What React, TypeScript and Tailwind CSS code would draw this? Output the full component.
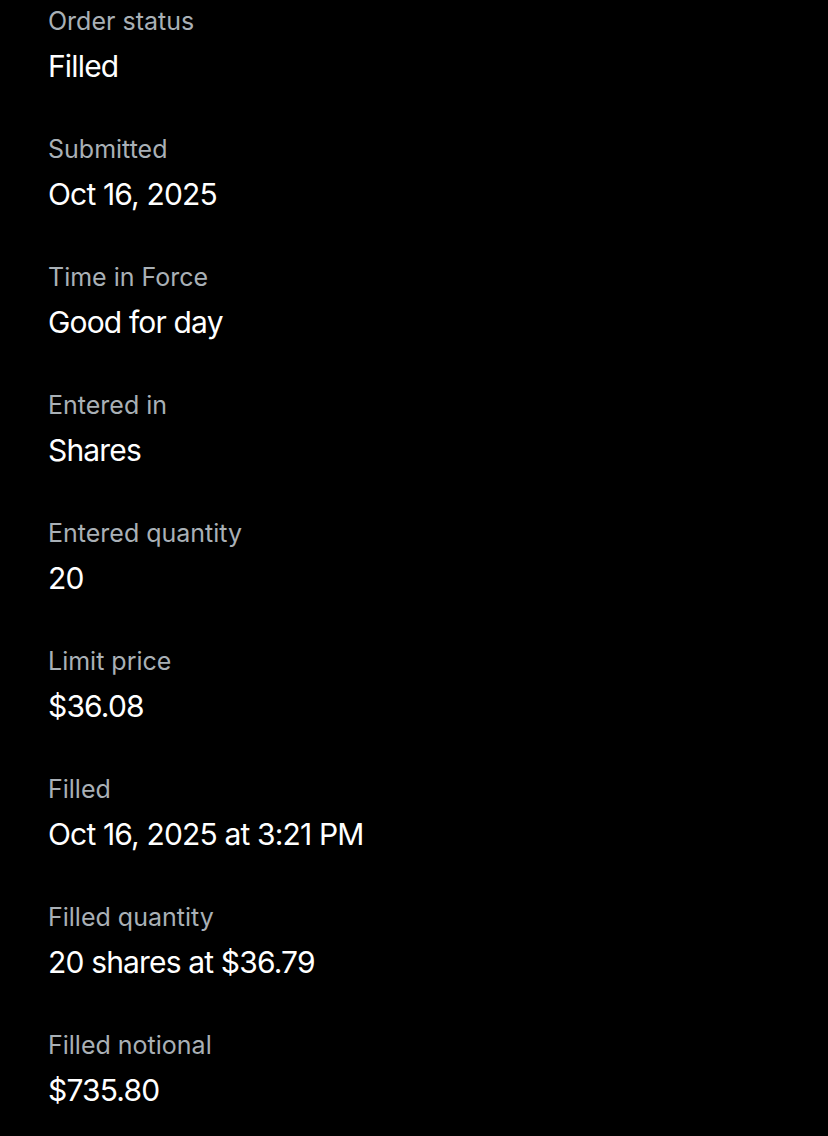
const rows = [
    { label: 'Order status', value: 'Filled' },
    { label: 'Submitted', value: 'Oct 16, 2025' },
    { label: 'Time in Force', value: 'Good for day' },
    { label: 'Entered in', value: 'Shares' },
    { label: 'Entered quantity', value: '20' },
    { label: 'Limit price', value: '$36.08' },
    { label: 'Filled', value: 'Oct 16, 2025 at 3:21 PM' },
    { label: 'Filled quantity', value: '20 shares at $36.79' },
    { label: 'Filled notional', value: '$735.80' },
];

export default function App() {
    return (
        <div className="min-h-screen bg-black px-[48px] pt-[5px] font-['Inter',sans-serif]">
            <div className="flex flex-col gap-[47px]">
                {rows.map(row => (
                    <div key={row.label} className="flex flex-col gap-[9px]">
                        <span className="text-[25px] leading-[32px] text-[#a9b0b6]">{row.label}</span>
                        <span className="text-[30px] leading-[40px] tracking-[-0.028em] text-white">{row.value}</span>
                    </div>
                ))}
            </div>
        </div>
    );
}
